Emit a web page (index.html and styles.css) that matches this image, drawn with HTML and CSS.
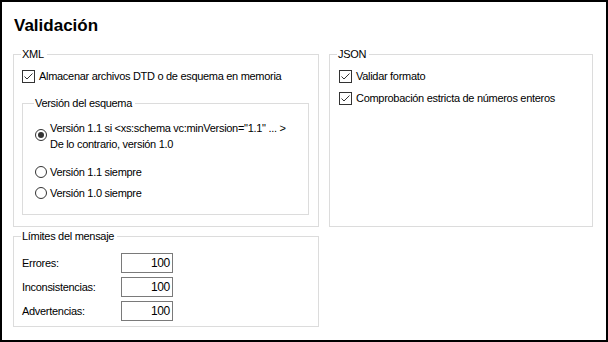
FILE: index.html
```html
<!DOCTYPE html>
<html lang="es">
<head>
<meta charset="utf-8">
<title>Validación</title>
<link rel="stylesheet" href="styles.css">
</head>
<body>

<div class="dialog">
	<h1 class="title">Validación</h1>

	<div class="groups">
		<fieldset class="group xml">
			<legend>XML</legend>
			<label class="opt">
				<span class="check"><svg width="13" height="13" viewBox="0 0 13 13"><rect x="0.5" y="0.5" width="12" height="12" fill="#fff" stroke="#333"/><polyline points="2.5,6.5 5,9 10.5,3.5" fill="none" stroke="#333" stroke-width="1"/></svg></span>
				Almacenar archivos DTD o de esquema en memoria
			</label>

			<fieldset class="group schema">
				<legend>Versión del esquema</legend>
				<label class="opt radio multi">
					<span class="dot on"></span>
					<span>Versión 1.1 si &lt;xs:schema vc:minVersion="1.1" ... &gt;<br>De lo contrario, versión 1.0</span>
				</label>
				<label class="opt radio">
					<span class="dot"></span>
					<span>Versión 1.1 siempre</span>
				</label>
				<label class="opt radio">
					<span class="dot"></span>
					<span>Versión 1.0 siempre</span>
				</label>
			</fieldset>
		</fieldset>

		<fieldset class="group json">
			<legend>JSON</legend>
			<label class="opt">
				<span class="check"><svg width="13" height="13" viewBox="0 0 13 13"><rect x="0.5" y="0.5" width="12" height="12" fill="#fff" stroke="#333"/><polyline points="2.5,6.5 5,9 10.5,3.5" fill="none" stroke="#333" stroke-width="1"/></svg></span>
				Validar formato
			</label>
			<label class="opt">
				<span class="check"><svg width="13" height="13" viewBox="0 0 13 13"><rect x="0.5" y="0.5" width="12" height="12" fill="#fff" stroke="#333"/><polyline points="2.5,6.5 5,9 10.5,3.5" fill="none" stroke="#333" stroke-width="1"/></svg></span>
				Comprobación estricta de números enteros
			</label>
		</fieldset>

		<fieldset class="group limits">
			<legend>Límites del mensaje</legend>
			<div class="field"><span class="lbl">Errores:</span><span class="num">100</span></div>
			<div class="field"><span class="lbl">Inconsistencias:</span><span class="num">100</span></div>
			<div class="field"><span class="lbl">Advertencias:</span><span class="num">100</span></div>
		</fieldset>
	</div>
</div>

</body>
</html>
```

FILE: styles.css
```css
*{ margin:0; padding:0; box-sizing:border-box;}
body{
	background:#fff;
	font:11px/16px "Liberation Sans", Arial, sans-serif;
	letter-spacing:-0.3px;
	color:#000;
}
.dialog{
	width:608px;
	height:342px;
	border:2px solid #000;
	padding:14px 0 0 11px;
}
.title{
	font:bold 17px/20px "Liberation Sans", Arial, sans-serif;
	letter-spacing:0;
	padding-left:1px;
	margin-bottom:11px;
}
.groups{
	display:grid;
	grid-template-columns:306px 264px;
	column-gap:10px;
	row-gap:2px;
	align-items:stretch;
}

/* group boxes */
.group{
	border:1px solid #dcdcdc;
	padding:0 9px 11px 8px;
	min-width:0;
}
.group legend{
	font:11px/14px "Liberation Sans", Arial, sans-serif;
	letter-spacing:-0.3px;
	padding:0 3px 0 1px;
	margin-left:-1px;
}
.xml{ padding-top:7px;}
.json{ padding:7px 9px 0 9px;}
.json legend{ margin-left:-2px;}
.schema{
	margin-top:12px;
	padding:10px 8px 13px 12px;
}
.limits{
	grid-column:1;
	padding:10px 9px 5px 8px;
}

/* checkbox / radio rows */
.opt{
	display:flex;
	align-items:center;
	height:16px;
	white-space:nowrap;
}
.json .opt + .opt{ margin-top:6px;}
.check{
	display:block;
	width:13px;
	height:13px;
	margin-right:4px;
}
.check svg{ display:block;}
.radio{ margin-top:5px;}
.radio.multi{
	height:auto;
	align-items:flex-start;
	margin:0 0 12px 0;
}
.dot{
	flex:none;
	width:12px;
	height:12px;
	border:1px solid #333;
	border-radius:50%;
	margin-right:3px;
	display:flex;
	align-items:center;
	justify-content:center;
}
.multi .dot{ margin-top:9px;}
.dot.on:after{
	content:"";
	width:6px;
	height:6px;
	border-radius:50%;
	background:#333;
}

/* number fields */
.field{
	display:flex;
	align-items:center;
	height:20px;
}
.field + .field{ margin-top:4px;}
.lbl{ width:99px;}
.num{
	width:52px;
	height:20px;
	border:1px solid #7a7a7a;
	text-align:right;
	padding-right:2px;
	line-height:18px;
	font-size:12px;
}
```
